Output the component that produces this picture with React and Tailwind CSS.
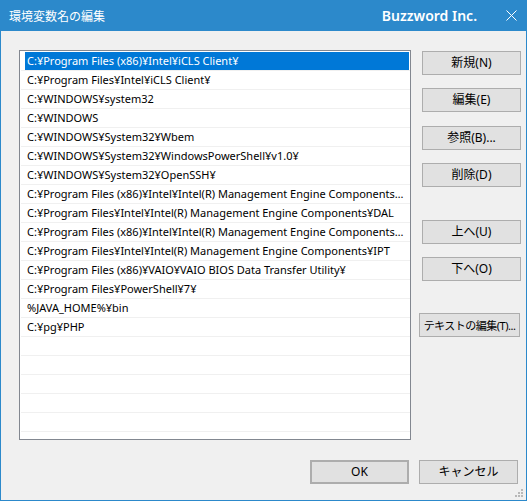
import React from "react"

const paths = [
  "C:¥Program Files (x86)¥Intel¥iCLS Client¥",
  "C:¥Program Files¥Intel¥iCLS Client¥",
  "C:¥WINDOWS¥system32",
  "C:¥WINDOWS",
  "C:¥WINDOWS¥System32¥Wbem",
  "C:¥WINDOWS¥System32¥WindowsPowerShell¥v1.0¥",
  "C:¥WINDOWS¥System32¥OpenSSH¥",
  "C:¥Program Files (x86)¥Intel¥Intel(R) Management Engine Components¥DAL",
  "C:¥Program Files¥Intel¥Intel(R) Management Engine Components¥DAL",
  "C:¥Program Files (x86)¥Intel¥Intel(R) Management Engine Components¥IPT",
  "C:¥Program Files¥Intel¥Intel(R) Management Engine Components¥IPT",
  "C:¥Program Files (x86)¥VAIO¥VAIO BIOS Data Transfer Utility¥",
  "C:¥Program Files¥PowerShell¥7¥",
  "%JAVA_HOME%¥bin",
  "C:¥pg¥PHP",
]

// pad out with empty rows so the list fills up like the real control
const rows = [...paths, ...Array(7).fill("")]

const WinButton = ({ children, className = "" }) => (
  <button
    className={`h-[24px] w-[99px] bg-[#e1e1e1] border border-[#adadad] text-[12px] text-black leading-none whitespace-nowrap flex items-center justify-center ${className}`}
  >
    {children}
  </button>
)

export default function App() {
  return (
    <div className="relative w-[527px] h-[501px] bg-[#f0f0f0] border-x border-b border-[#2c89cb] font-['Noto_Sans','Noto_Sans_CJK_JP',sans-serif] overflow-hidden">
      {/* title bar */}
      <div className="h-[31px] bg-[#2c89cb] flex items-center text-white -mx-[1px] pl-[9px] pr-[10px]">
        <span className="text-[12px] font-['Noto_Sans_CJK_JP',sans-serif]">環境変数名の編集</span>
        <span className="ml-auto text-[14px] font-semibold mr-[29px]">Buzzword Inc.</span>
        <svg width="11" height="11" viewBox="0 0 11 11" className="mb-[1px]">
          <path d="M0.5 0.5 L10.5 10.5 M10.5 0.5 L0.5 10.5" stroke="white" strokeWidth="1" fill="none" />
        </svg>
      </div>

      <div className="flex pt-[19px] pl-[18px]">
        {/* path list */}
        <div className="w-[392px] h-[390px] border border-[#828790] bg-white pt-[1px] pl-[1px] overflow-hidden">
          {rows.map((p, i) => (
            <div key={i} className="h-[19px] border-b border-[#f0f0f0]">
              <div
                className={`h-[18px] ml-[4px] mr-[1px] pl-[2px] pr-[2px] text-[11px] leading-[18px] whitespace-nowrap overflow-hidden text-ellipsis ${
                  i === 0 ? "bg-[#0078d7] text-white" : "text-black"
                }`}
              >
                {p}
              </div>
            </div>
          ))}
        </div>

        {/* side buttons */}
        <div className="flex flex-col ml-[11px] pt-[1px]">
          <WinButton>新規(N)</WinButton>
          <WinButton className="mt-[13px]">編集(E)</WinButton>
          <WinButton className="mt-[14px]">参照(B)...</WinButton>
          <WinButton className="mt-[13px]">削除(D)</WinButton>
          <WinButton className="mt-[33px]">上へ(U)</WinButton>
          <WinButton className="mt-[13px]">下へ(O)</WinButton>
          <WinButton className="mt-[32px] -ml-[3px] w-[101px] !text-[11px] tracking-[-0.5px]">テキストの編集(T)...</WinButton>
        </div>
      </div>

      <div className="flex justify-end gap-[10px] mt-[20px] pr-[8px]">
        <WinButton className="border-2 border-[#0078d7]">OK</WinButton>
        <WinButton>キャンセル</WinButton>
      </div>

      {/* size grip */}
      <div className="absolute right-[3px] bottom-[3px] w-[8px] h-[8px]">
        <span className="absolute right-0 top-0 w-[2px] h-[2px] bg-[#b8b8b8]" />
        <span className="absolute right-0 top-[3px] w-[2px] h-[2px] bg-[#b8b8b8]" />
        <span className="absolute right-[3px] top-[3px] w-[2px] h-[2px] bg-[#b8b8b8]" />
        <span className="absolute right-0 top-[6px] w-[2px] h-[2px] bg-[#b8b8b8]" />
        <span className="absolute right-[3px] top-[6px] w-[2px] h-[2px] bg-[#b8b8b8]" />
        <span className="absolute right-[6px] top-[6px] w-[2px] h-[2px] bg-[#b8b8b8]" />
      </div>
    </div>
  )
}
